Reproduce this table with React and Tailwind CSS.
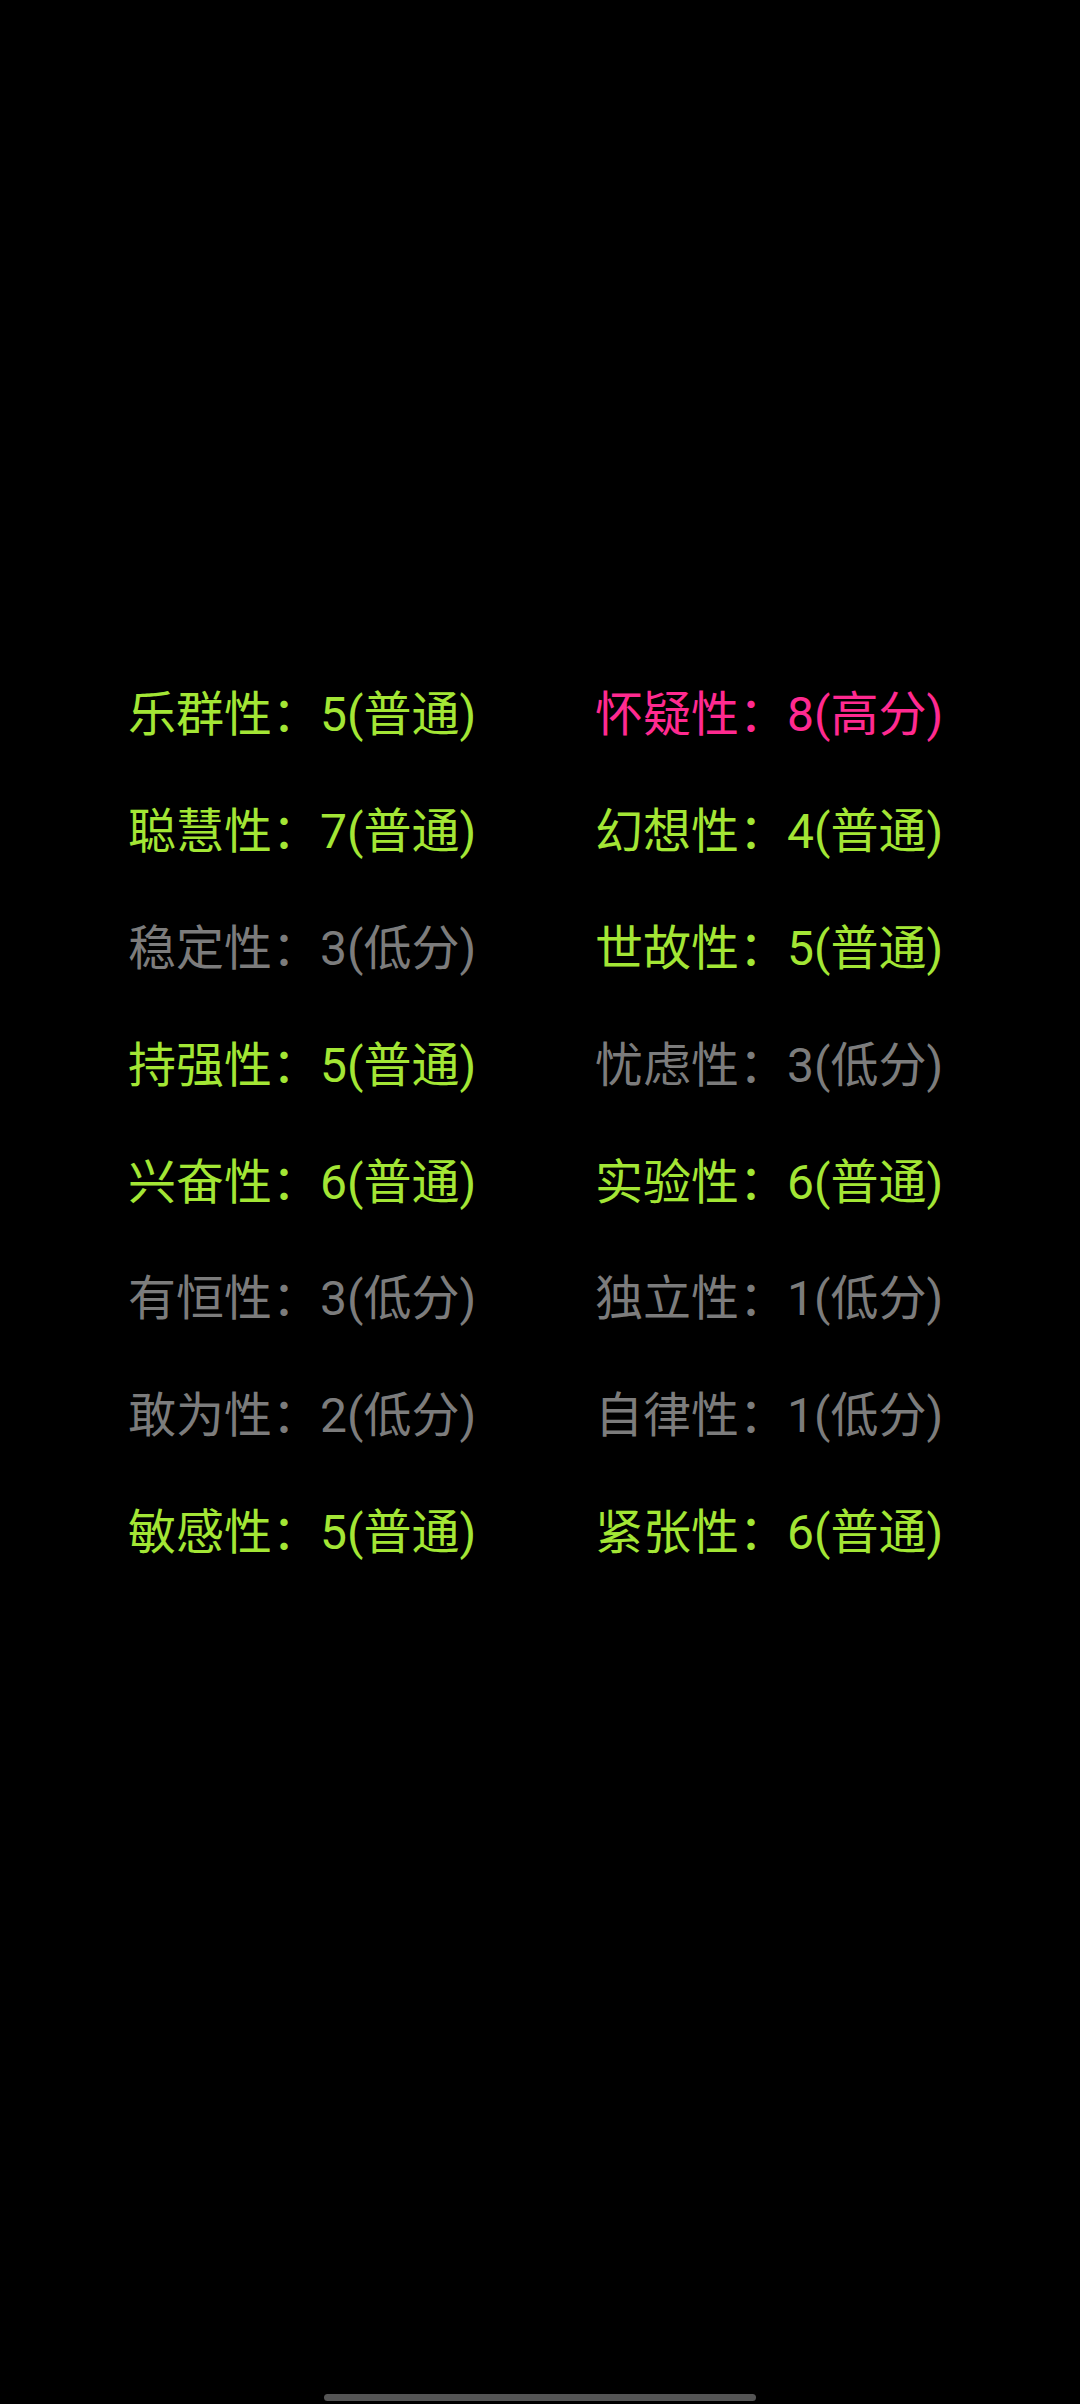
import React from "react";

const GREEN = "text-[#a3e635]";
const PINK = "text-[#ff2a90]";
const GREY = "text-[#7c7c7c]";

const traits = [
  { id: 1, name: "乐群性", score: 5, level: "普通", color: GREEN },
  { id: 2, name: "怀疑性", score: 8, level: "高分", color: PINK },
  { id: 3, name: "聪慧性", score: 7, level: "普通", color: GREEN },
  { id: 4, name: "幻想性", score: 4, level: "普通", color: GREEN },
  { id: 5, name: "稳定性", score: 3, level: "低分", color: GREY },
  { id: 6, name: "世故性", score: 5, level: "普通", color: GREEN },
  { id: 7, name: "持强性", score: 5, level: "普通", color: GREEN },
  { id: 8, name: "忧虑性", score: 3, level: "低分", color: GREY },
  { id: 9, name: "兴奋性", score: 6, level: "普通", color: GREEN },
  { id: 10, name: "实验性", score: 6, level: "普通", color: GREEN },
  { id: 11, name: "有恒性", score: 3, level: "低分", color: GREY },
  { id: 12, name: "独立性", score: 1, level: "低分", color: GREY },
  { id: 13, name: "敢为性", score: 2, level: "低分", color: GREY },
  { id: 14, name: "自律性", score: 1, level: "低分", color: GREY },
  { id: 15, name: "敏感性", score: 5, level: "普通", color: GREEN },
  { id: 16, name: "紧张性", score: 6, level: "普通", color: GREEN },
];

const App = () => {
  return (
    <main
      className="w-[1080px] h-[2404px] bg-black flex flex-col"
      style={{ fontFamily: '"Roboto", "Noto Sans CJK SC", sans-serif' }}
    >
      {/* trait grid */}
      <div className="pt-[657px] pl-[128px] grid grid-cols-[467px_1fr] auto-rows-[116.8px]">
        {traits.map(({ id, name, score, level, color }) => (
          <div key={id} className={`flex items-center text-[48px] leading-none ${color}`}>
            {name}：{score}({level})
          </div>
        ))}
      </div>

      <div className="flex-1" />

      {/* home indicator */}
      <div className="flex justify-center pb-[3px]">
        <div className="w-[432px] h-[7px] rounded-full bg-[#555555]" />
      </div>
    </main>
  );
};

export default App;
